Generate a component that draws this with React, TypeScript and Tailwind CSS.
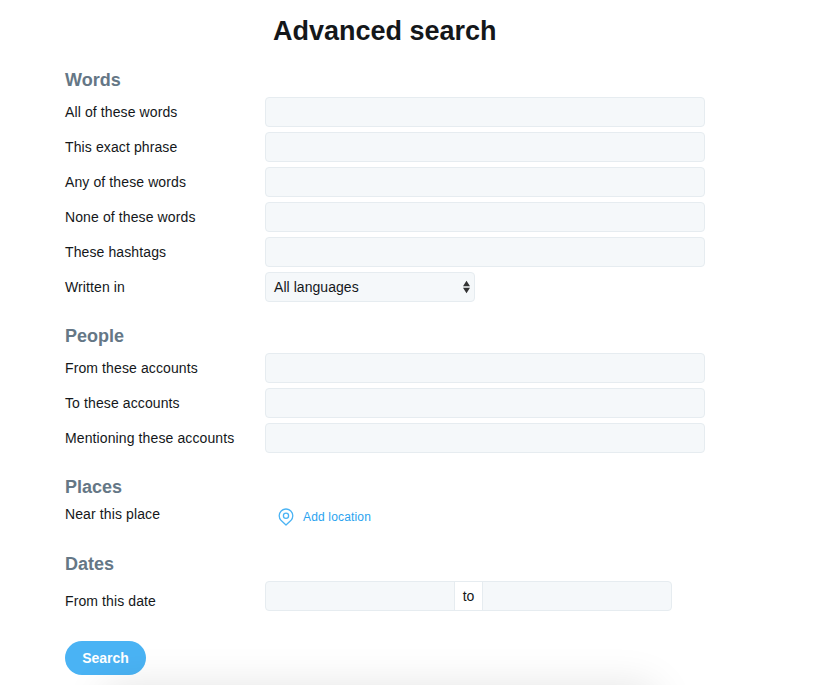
const F = "[font-family:'Liberation_Sans',Arial,sans-serif]";

function Input({ w = "w-[440px]" }: { w?: string }) {
  return <div className={`h-[30px] ${w} rounded-[4px] border border-[#e6ecf0] bg-[#f5f8fa]`} />;
}

function Row({ label }: { label: string }) {
  return (
    <div className="flex h-[30px] items-center">
      <div className="w-[200px] text-[14px] leading-[30px] tracking-[0.11px] text-[#14171a]">{label}</div>
      <Input />
    </div>
  );
}

function Heading({ children, className = "" }: { children: string; className?: string }) {
  return <h2 className={`text-[18px] font-bold leading-[24px] text-[#657786] ${className}`}>{children}</h2>;
}

export default function App() {
  return (
    <div className={`relative h-[685px] w-[831px] overflow-hidden bg-white pl-[65px] ${F}`}>
      <h1 className="ml-[208px] pt-[15px] text-[27px] font-bold leading-[32px] text-[#14171a]">Advanced search</h1>

      <Heading className="mt-[21px]">Words</Heading>
      <div className="mt-[5px] flex flex-col gap-[5px]">
        <Row label="All of these words" />
        <Row label="This exact phrase" />
        <Row label="Any of these words" />
        <Row label="None of these words" />
        <Row label="These hashtags" />
        <div className="flex h-[30px] items-center">
          <div className="w-[200px] text-[14px] tracking-[0.11px] text-[#14171a]">Written in</div>
          <div className="flex h-[30px] w-[210px] items-center justify-between rounded-[4px] border border-[#e6ecf0] bg-[#f5f8fa] pl-[8px] pr-[3px] text-[14px] tracking-[0.05px] text-[#14171a]">
            <span>All languages</span>
            <svg width="9" height="14" viewBox="0 0 9 14" fill="#333">
              <path d="M4.5 .8 8 6.2H1zM1 7.8h7l-3.5 5.4z" />
            </svg>
          </div>
        </div>
      </div>

      <Heading className="mt-[22px]">People</Heading>
      <div className="mt-[5px] flex flex-col gap-[5px]">
        <Row label="From these accounts" />
        <Row label="To these accounts" />
        <Row label="Mentioning these accounts" />
      </div>

      <Heading className="mt-[22px]">Places</Heading>
      <div className="mt-[6px] flex h-[30px] items-start">
        <div className="w-[200px] text-[14px] leading-[18px] tracking-[0.11px] text-[#14171a]">Near this place</div>
        <div className="ml-[13px] mt-[3px] flex items-center gap-[9px] text-[12px] tracking-[0.16px]">
          <svg width="16" height="18" viewBox="0 0 16 18" fill="none" stroke="#4ab3f4" strokeWidth="1.3">
            <path d="M8 17 3.2 12.6A6.8 6.8 0 1 1 12.8 12.6Z" strokeLinejoin="round" />
            <circle cx="8" cy="7.8" r="2.6" />
          </svg>
          <span className="text-[#2aa3ef]">Add location</span>
        </div>
      </div>

      <Heading className="mt-[17px]">Dates</Heading>
      <div className="mt-[5px] flex h-[30px] items-center">
        <div className="w-[200px] pt-[10px] text-[14px] tracking-[0.11px] text-[#14171a]">From this date</div>
        <div className="flex h-[30px] w-[407px] rounded-[4px] border border-[#e6ecf0] bg-[#f5f8fa]">
          <div className="flex-1" />
          <div className="flex w-[29px] items-center justify-center border-x border-[#e6ecf0] bg-white text-[14px] text-[#14171a]">to</div>
          <div className="w-[188px]" />
        </div>
      </div>

      <button className="mt-[30px] h-[34px] w-[81px] rounded-full bg-[#4ab3f4] text-[14px] font-bold text-white">Search</button>

      <div className="absolute left-[120px] top-[702px] h-[40px] w-[520px] rounded-[6px] bg-white shadow-[0_0_40px_18px_rgba(0,0,0,0.1)]" />
    </div>
  );
}
